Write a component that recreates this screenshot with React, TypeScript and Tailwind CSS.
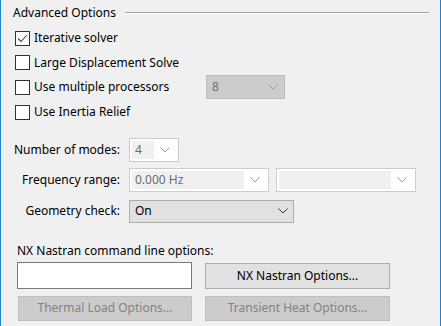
import React from "react";

const font = { fontFamily: '"Segoe UI", "Noto Sans", "Open Sans", sans-serif' };

function Chevron({ color = "#a0a0a0" }: { color?: string }) {
  return (
    <svg width="10" height="6" viewBox="0 0 10 6" className="shrink-0">
      <polyline points="0.5,0.5 5,5 9.5,0.5" fill="none" stroke={color} strokeWidth="1" />
    </svg>
  );
}

function CheckBox({ checked, label }: { checked?: boolean; label: string }) {
  return (
    <div className="flex items-center">
      <div className="w-[15px] h-[15px] border border-[#333333] bg-white flex items-center justify-center shrink-0">
        {checked && (
          <svg width="13" height="13" viewBox="0 0 13 13">
            <polyline points="2,6.5 5,9.5 11,3" fill="none" stroke="#444444" strokeWidth="1.1" />
          </svg>
        )}
      </div>
      <span className="ml-[4px] whitespace-nowrap">{label}</span>
    </div>
  );
}

// disabled combo box (editable style): white frame, light inner field
function DisabledCombo({ width, value }: { width: string; value?: string }) {
  return (
    <div className={`${width} h-[24px] border border-[#cccccc] bg-white flex items-center p-[2px]`}>
      <div className="flex-1 h-full bg-[#f0f0f0] flex items-center pl-[3px] text-[#6d6d6d] whitespace-nowrap overflow-hidden">
        {value}
      </div>
      <div className="w-[22px] flex justify-center">
        <Chevron />
      </div>
    </div>
  );
}

export default function App() {
  return (
    <div
      className="w-[441px] h-[326px] bg-[#f0f0f0] border-x border-[#1883d7] text-[12px] text-black overflow-hidden"
      style={font}
    >
      {/* group header */}
      <div className="h-[26px] flex items-center pl-[12px] pr-[11px]">
        <span className="whitespace-nowrap">Advanced Options</span>
        <div className="flex-1 ml-[9px] border-t border-[#a0a0a0] border-b border-b-white" />
      </div>

      <div className="pl-[14px]">
        <div className="h-[24.6px] flex items-center">
          <CheckBox checked label="Iterative solver" />
        </div>
        <div className="h-[24.6px] flex items-center">
          <CheckBox label="Large Displacement Solve" />
        </div>
        <div className="h-[24.6px] flex items-center">
          <div className="w-[191px]">
            <CheckBox label="Use multiple processors" />
          </div>
          <div className="w-[79px] h-[24px] border border-[#bfbfbf] bg-[#cccccc] flex items-center justify-between pl-[5px] pr-[6px] text-[#6d6d6d]">
            <span>8</span>
            <Chevron />
          </div>
        </div>
        <div className="h-[24.6px] flex items-center">
          <CheckBox label="Use Inertia Relief" />
        </div>
      </div>

      {/* modal options */}
      <div className="mt-[13.6px] flex items-center h-[24px]">
        <div className="w-[119px] text-right whitespace-nowrap">Number of modes:</div>
        <div className="ml-[9px]">
          <DisabledCombo width="w-[50px]" value="4" />
        </div>
      </div>
      <div className="mt-[6px] flex items-center h-[24px]">
        <div className="w-[119px] text-right whitespace-nowrap">Frequency range:</div>
        <div className="ml-[9px]">
          <DisabledCombo width="w-[140px]" value="0.000 Hz" />
        </div>
        <div className="ml-[7px]">
          <DisabledCombo width="w-[140px]" />
        </div>
      </div>
      <div className="mt-[8px] flex items-center h-[23px]">
        <div className="w-[119px] text-right whitespace-nowrap">Geometry check:</div>
        <div className="ml-[9px] w-[165px] h-[23px] border border-[#adadad] bg-[#e1e1e1] flex items-center justify-between pl-[5px] pr-[5px]">
          <span>On</span>
          <Chevron color="#333333" />
        </div>
      </div>

      {/* command line */}
      <div className="mt-[20px] h-[16px] flex items-center pl-[16px] whitespace-nowrap">
        NX Nastran command line options:
      </div>
      <div className="mt-[3px] flex items-start pl-[16px]">
        <div className="w-[175px] h-[27px] bg-white border border-[#7a7a7a]" />
        <button className="ml-[13px] mt-[1px] w-[185px] h-[26px] bg-[#e1e1e1] border border-[#adadad] text-black">
          NX Nastran Options...
        </button>
      </div>
      <div className="mt-[7px] flex items-start pl-[17px]">
        <button className="w-[174px] h-[25px] bg-[#cccccc] border border-[#bfbfbf] text-[#838383]">
          Thermal Load Options...
        </button>
        <button className="ml-[13px] w-[185px] h-[25px] bg-[#cccccc] border border-[#bfbfbf] text-[#838383]">
          Transient Heat Options...
        </button>
      </div>
    </div>
  );
}
